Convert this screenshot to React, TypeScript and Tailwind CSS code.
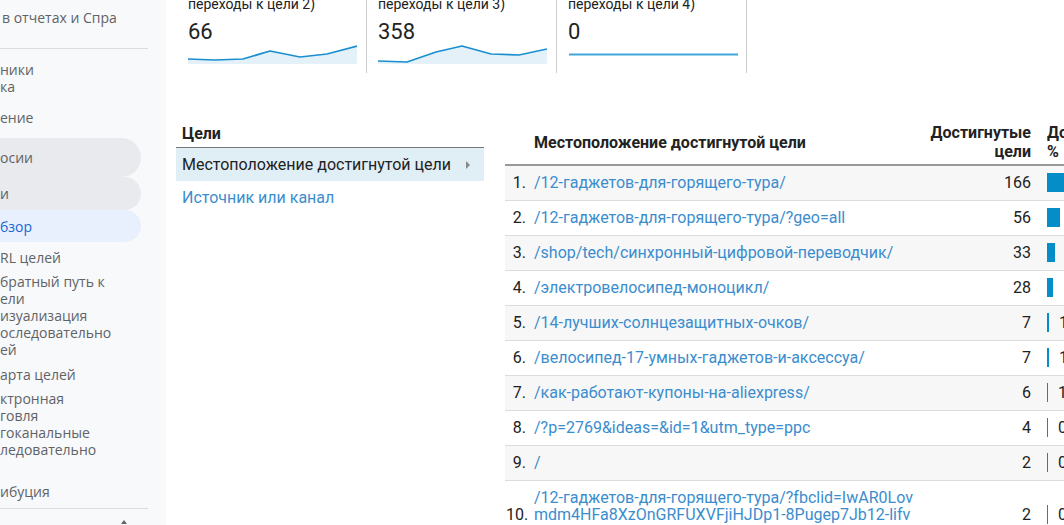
import React from 'react';

const cards = [
  {
    label: 'переходы к цели 2)',
    value: '66',
    pts: [[0, 15], [27, 16], [55, 15], [82, 7], [112, 13], [139, 10], [169, 2]],
  },
  {
    label: 'переходы к цели 3)',
    value: '358',
    pts: [[0, 17], [29, 18], [58, 8], [84, 2], [113, 10], [141, 11], [169, 5]],
  },
  { label: 'переходы к цели 4)', value: '0', pts: null },
];

const rows = [
  { url: ['/12-гаджетов-для-горящего-тура/'], value: 166, pct: '34,87%' },
  { url: ['/12-гаджетов-для-горящего-тура/?geo=all'], value: 56, pct: '11,76%' },
  { url: ['/shop/tech/синхронный-цифровой-переводчик/'], value: 33, pct: '6,93%' },
  { url: ['/электровелосипед-моноцикл/'], value: 28, pct: '5,88%' },
  { url: ['/14-лучших-солнцезащитных-очков/'], value: 7, pct: '1,47%' },
  { url: ['/велосипед-17-умных-гаджетов-и-аксессуа/'], value: 7, pct: '1,47%' },
  { url: ['/как-работают-купоны-на-aliexpress/'], value: 6, pct: '1,26%' },
  { url: ['/?p=2769&ideas=&id=1&utm_type=ppc'], value: 4, pct: '0,84%' },
  { url: ['/'], value: 2, pct: '0,42%' },
  {
    url: [
      '/12-гаджетов-для-горящего-тура/?fbclid=IwAR0Lov',
      'mdm4HFa8XzOnGRFUXVFjiHJDp1-8Pugep7Jb12-lifv',
      'qW3aXnEhm0Tk',
    ],
    value: 2,
    pct: '0,42%',
  },
];

const Spark = ({ pts }: { pts: number[][] | null }) => {
  if (!pts) {
    return (
      <svg width="171" height="20" viewBox="0 0 171 20" className="block">
        <line x1="1" y1="10.5" x2="170" y2="10.5" stroke="#3ea6db" strokeWidth="2" />
      </svg>
    );
  }
  const line = pts.map(p => p.join(',')).join(' ');
  return (
    <svg width="169" height="20" viewBox="0 0 169 20" className="block">
      <polygon points={`0,20 ${line} 169,20`} fill="#e4f1f9" />
      <polyline points={line} fill="none" stroke="#1a8fd0" strokeWidth="1.7" strokeLinejoin="round" />
    </svg>
  );
};

const SideText = ({ lines, className = '' }: { lines: string[]; className?: string }) => (
  <div className={`text-[14px] leading-[17px] whitespace-nowrap ${className}`}>
    {lines.map((l, i) => (
      <div key={i} className="h-[17px]">{l}</div>
    ))}
  </div>
);

const Sidebar = () => (
  <div className="w-[166px] h-full shrink-0 bg-[#f8f9fa] overflow-hidden font-['Open_Sans',sans-serif] text-[#5f6368]">
    <div className="h-[35px] flex items-center pl-[2px]">
      <div className="w-[114px] overflow-hidden whitespace-nowrap text-[14px]">в отчетах и Справка</div>
    </div>
    <div className="mt-[13px] w-[148px] h-px bg-[#dadce0]" />
    <SideText className="mt-[12px]" lines={['ники', 'ка']} />
    <SideText className="mt-[14px]" lines={['ение']} />
    <div className="mt-[12px] h-[39px] w-[141px] rounded-r-full bg-[#e8eaed] flex items-center text-[14px]">осии</div>
    <div className="h-[33px] w-[141px] rounded-r-full bg-[#e8eaed] flex items-center text-[14px]">и</div>
    <div className="h-[32px] w-[141px] rounded-r-full bg-[#e8f0fe] flex items-center text-[14px] text-[#1967d2]">бзор</div>
    <SideText className="mt-[7px]" lines={['RL целей']} />
    <SideText className="mt-[7px]" lines={['братный путь к', 'ели']} />
    <SideText lines={['изуализация', 'оследовательно', 'ей']} />
    <SideText className="mt-[8px]" lines={['арта целей']} />
    <SideText className="mt-[7px]" lines={['ктронная', 'говля', 'гоканальные', 'ледовательно', '']} />
    <SideText className="mt-[8px]" lines={['ибуция']} />
    <div className="mt-[8px] w-[148px] h-px bg-[#dadce0]" />
    <div className="mt-[11px] pl-[121px]">
      <div className="w-0 h-0 border-x-[3px] border-x-transparent border-b-[4px] border-b-[#5f6368]" />
    </div>
  </div>
);

const Scorecards = () => (
  <div className="flex pl-[11px]">
    {cards.map(c => (
      <div key={c.label} className="w-[190px] h-[73px] border-r border-[#ccc] pl-[11px]">
        <div className="-mt-[5px] text-[14px] leading-[18px] text-[#222] whitespace-nowrap">{c.label}</div>
        <div className="mt-[7px] text-[22px] leading-[24px] text-[#222]">{c.value}</div>
        <Spark pts={c.pts} />
      </div>
    ))}
  </div>
);

const GoalsPanel = () => (
  <div className="w-[308px] shrink-0">
    <div className="pt-[5px] pb-[4px] pl-[6px] text-[16px] leading-[18px] font-bold text-[#222] border-b border-[#777]">Цели</div>
    <div className="h-[33px] bg-[#e0eef6] flex items-center pl-[6px] pr-[14px] text-[16px] text-[#222]">
      <span className="flex-1">Местоположение достигнутой цели</span>
      <div className="w-0 h-0 border-y-[4px] border-y-transparent border-l-[4px] border-l-[#888]" />
    </div>
    <div className="h-[34px] flex items-center pl-[6px] text-[16px] text-[#3b8dce]">Источник или канал</div>
  </div>
);

const GoalsTable = () => (
  <div className="ml-[21px] w-[640px] shrink-0">
    <div className="flex items-center pt-[3px] pb-[3px] border-b-2 border-[#999] text-[16px] leading-[19px] font-bold text-[#222]">
      <div className="w-[29px] shrink-0" />
      <div className="w-[382px] shrink-0">Местоположение достигнутой цели</div>
      <div className="w-[125px] shrink-0 text-right pr-[10px]">Достигнутые<br />цели</div>
      <div className="pl-[6px] whitespace-nowrap">Доля целей<br />%</div>
    </div>
    {rows.map((r, i) => (
      <div
        key={i}
        className={`flex items-center border-b border-[#dcdcdc] pt-2 pb-[9px] text-[16px] leading-[17px] ${i % 2 === 0 ? 'bg-[#f7f7f7]' : 'bg-white'}`}
      >
        <div className="w-[29px] shrink-0 pl-[1px] pr-[8px] text-right whitespace-nowrap text-[#222]">{i + 1}.</div>
        <div className="w-[382px] shrink-0 text-[#3b8dce] whitespace-nowrap">
          {r.url.map(u => (
            <div key={u}>{u}</div>
          ))}
        </div>
        <div className="w-[125px] shrink-0 text-right pr-[10px] text-[#222]">{r.value}</div>
        <div className="h-[17px] flex items-center pl-[6px] text-[#222] whitespace-nowrap">
          <div className="h-[19px] shrink-0 bg-[#058dc7]" style={{ width: Math.max(1, Math.round(r.value * 0.232)) }} />
          <span className="ml-[10px]">{r.pct}</span>
        </div>
      </div>
    ))}
  </div>
);

export default function App() {
  return (
    <div className="w-[1064px] h-[525px] overflow-hidden flex bg-white font-['Roboto',sans-serif]">
      <Sidebar />
      <div className="flex-1 min-w-0">
        <Scorecards />
        <div className="mt-[47px] flex pl-[10px]">
          <GoalsPanel />
          <GoalsTable />
        </div>
      </div>
    </div>
  );
}
